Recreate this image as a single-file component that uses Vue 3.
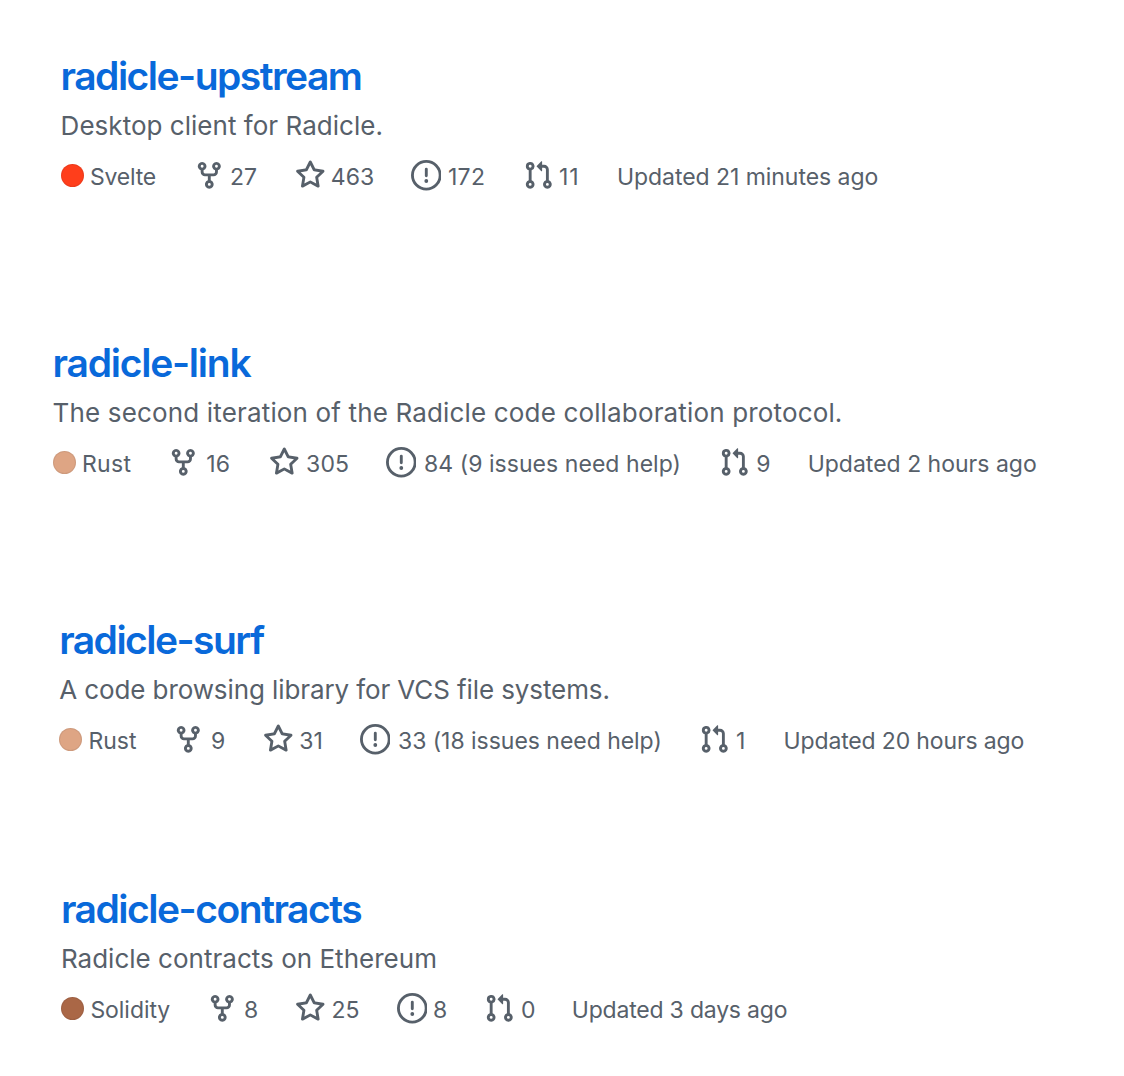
<script setup>
// Each stat is [icon, start of icon, start of label, label, letter spacing].
const repos = [
  {
    id: 'upstream', left: 60.6, height: 287, name: 'radicle-upstream', nameGap: -1.52,
    about: 'Desktop client for Radicle.', aboutGap: 0.03, color: '#ff3e1b',
    stats: [
      ['dot', 60.6, 90, 'Svelte', -0.2], ['fork', 193.8, 230, '27', 0], ['star', 294.6, 330.7, '463', 0.1],
      ['issue', 410.6, 448, '172', 0.3], ['pull', 522.8, 559, '11', 1], ['', 617, 617, 'Updated 21 minutes ago', -0.05],
    ],
  },
  {
    id: 'link', left: 52.6, height: 277, name: 'radicle-link', nameGap: -1.24,
    about: 'The second iteration of the Radicle code collaboration protocol.', aboutGap: 0.155, color: '#dea584',
    stats: [
      ['dot', 52.6, 82, 'Rust', 0.3], ['fork', 168.1, 206.2, '16', 0.3], ['star', 268.6, 306, '305', 0.2],
      ['issue', 385.6, 424, '84 (9 issues need help)', 0.05], ['pull', 718.8, 756.2, '9', 0], ['', 807.7, 807.7, 'Updated 2 hours ago', 0],
    ],
  },
  {
    id: 'surf', left: 59.2, height: 269, name: 'radicle-surf', nameGap: -1.54,
    about: 'A code browsing library for VCS file systems.', aboutGap: -0.1, color: '#dea584',
    stats: [
      ['dot', 59.2, 88.4, 'Rust', 0], ['fork', 173.4, 211, '9', 0], ['star', 263.2, 299.2, '31', 0],
      ['issue', 359.8, 398, '33 (18 issues need help)', -0.03], ['pull', 698.8, 736, '1', 0], ['', 783.6, 783.6, 'Updated 20 hours ago', -0.15],
    ],
  },
  {
    id: 'contracts', left: 60.9, height: 243, name: 'radicle-contracts', nameGap: -1.48,
    about: 'Radicle contracts on Ethereum', aboutGap: 0.02, color: '#aa6746',
    stats: [
      ['dot', 60.9, 90.4, 'Solidity', -0.05], ['fork', 207.3, 244, '8', 0], ['star', 294.9, 331.4, '25', 0],
      ['issue', 396.8, 433, '8', 0], ['pull', 484.2, 521, '0', 0], ['', 571.8, 571.8, 'Updated 3 days ago', -0.2],
    ],
  },
]

const icons = {
  fork: 'M5 3.25a.75.75 0 11-1.5 0 .75.75 0 011.5 0zm0 2.122a2.25 2.25 0 10-1.5 0v.878A2.25 2.25 0 005.75 8.5h1.5v2.128a2.251 2.251 0 101.5 0V8.5h1.5a2.25 2.25 0 002.25-2.25v-.878a2.25 2.25 0 10-1.5 0v.878a.75.75 0 01-.75.75h-4.5A.75.75 0 015 6.25v-.878zm3.75 7.378a.75.75 0 11-1.5 0 .75.75 0 011.5 0zm3-8.75a.75.75 0 100-1.5.75.75 0 000 1.5z',
  star: 'M8 .25a.75.75 0 01.673.418l1.882 3.815 4.21.612a.75.75 0 01.416 1.279l-3.046 2.97.719 4.192a.75.75 0 01-1.088.791L8 12.347l-3.766 1.98a.75.75 0 01-1.088-.79l.72-4.194L.818 6.374a.75.75 0 01.416-1.28l4.21-.611L7.327.668A.75.75 0 018 .25zm0 2.445L6.615 5.5a.75.75 0 01-.564.41l-3.097.45 2.24 2.184a.75.75 0 01.216.664l-.528 3.084 2.769-1.456a.75.75 0 01.698 0l2.77 1.456-.53-3.084a.75.75 0 01.216-.664l2.24-2.183-3.096-.45a.75.75 0 01-.564-.41L8 2.694z',
  issue: 'M8 1.5a6.5 6.5 0 100 13 6.5 6.5 0 000-13zM0 8a8 8 0 1116 0A8 8 0 010 8zm9 3a1 1 0 11-2 0 1 1 0 012 0zm-.25-6.25a.75.75 0 00-1.5 0v3.5a.75.75 0 001.5 0v-3.5z',
  pull: 'M7.177 3.073L9.573.677A.25.25 0 0110 .854v4.792a.25.25 0 01-.427.177L7.177 3.427a.25.25 0 010-.354zM3.75 2.5a.75.75 0 100 1.5.75.75 0 000-1.5zm-2.25.75a2.25 2.25 0 113 2.122v5.256a2.251 2.251 0 11-1.5 0V5.372A2.25 2.25 0 011.5 3.25zM11 2.5h-1V4h1a1 1 0 011 1v5.628a2.251 2.251 0 101.5 0V5A2.5 2.5 0 0011 2.5zm1 10.25a.75.75 0 111.5 0 .75.75 0 01-1.5 0zM3.75 12a.75.75 0 100 1.5.75.75 0 000-1.5z',
}

const columns = (stats) =>
  stats.map((s, i) => (stats[i + 1] ? `${(stats[i + 1][1] - s[1]).toFixed(1)}px` : 'auto')).join(' ')
const lead = (s) => `${(s[2] - s[1]).toFixed(1)}px`
</script>

<template>
  <main class="page">
    <article v-for="r in repos" :key="r.id" class="repo" :style="{ height: r.height + 'px', paddingLeft: r.left + 'px' }">
      <h3 class="name" :style="{ letterSpacing: r.nameGap + 'px' }">{{ r.name }}</h3>
      <p class="about" :style="{ letterSpacing: r.aboutGap + 'px' }">{{ r.about }}</p>
      <div class="meta" :style="{ gridTemplateColumns: columns(r.stats) }">
        <div v-for="s in r.stats" :key="s[0]" class="stat">
          <span class="lead" :style="{ width: lead(s) }">
            <span v-if="s[0] === 'dot'" class="dot" :style="{ backgroundColor: r.color }"></span>
            <svg v-else-if="s[0]" class="icon" viewBox="0 0 16 16" aria-hidden="true"><path :d="icons[s[0]]" fill-rule="evenodd" /></svg>
          </span>
          <span class="label" :style="{ letterSpacing: s[4] + 'px' }">{{ s[3] }}</span>
        </div>
      </div>
    </article>
  </main>
</template>

<style>
body { margin: 0; background: #fff; }
</style>

<style scoped>
.page { height: 1076px; box-sizing: border-box; background: #fff; font-family: Inter, sans-serif; color: #57606a; overflow: hidden; white-space: nowrap; }
.repo { box-sizing: border-box; padding-top: 56px; }
.name { margin: 0; font-size: 39px; line-height: 40px; font-weight: 600; color: #0969da; }
.about { margin: 10px 0 14px; font-size: 26px; line-height: 40px; }
.meta { display: grid; height: 31px; font-size: 23px; line-height: 28px; }
.stat { display: flex; align-items: center; }
.lead { display: flex; align-items: center; flex: none; }
.icon { display: block; flex: none; width: 30.6px; height: 30.6px; fill: currentColor; }
.dot { width: 23px; height: 23px; border-radius: 50%; box-sizing: border-box; border: 1.5px solid rgba(27, 31, 35, 0.08); }
.label { padding-top: 3px; }
</style>
